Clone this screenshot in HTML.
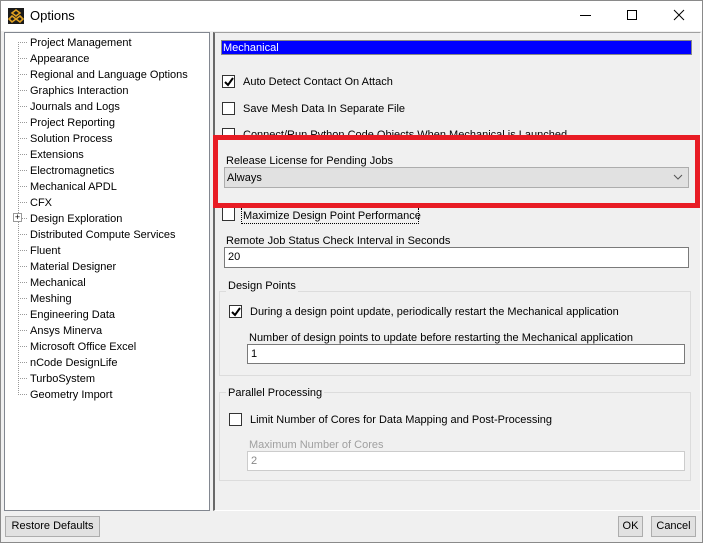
<!DOCTYPE html>
<html><head><style>
*{margin:0;padding:0;box-sizing:border-box}
body{width:703px;height:543px;background:#f0f0f0;font-family:"Liberation Sans",sans-serif;font-size:11px;color:#000;position:relative;overflow:hidden}
.a{position:absolute}
.t{position:absolute;white-space:nowrap;line-height:14px}
.cb{position:absolute;width:13px;height:13px;border:1px solid #333;background:#fff}
.inp{position:absolute;background:#fff;border:1px solid #7a7a7a;padding-left:3px;line-height:18px}
.grp{position:absolute;border:1px solid #dcdcdc}
.btn{position:absolute;border:1px solid #adadad;background:#e1e1e1;text-align:center;line-height:19px}
</style></head><body>
<div class="a" style="left:0;top:0;width:703px;height:31px;background:#fff"></div>
<svg class="a" style="left:8px;top:8px" width="16" height="16"><rect width="16" height="16" fill="#1a1a1a"/><g fill="none" stroke="#e0a020" stroke-width="1.6"><path d="M8 2L12 5L8 8L4 5Z"/><path d="M4 8L8 11L4 14L1 11Z"/><path d="M12 8L15 11L12 14L8 11Z"/></g></svg>
<div class="t" style="left:30px;top:9px;font-size:13px">Options</div>
<div class="a" style="left:580px;top:15px;width:11px;height:1px;background:#000"></div>
<div class="a" style="left:627px;top:10px;width:10px;height:10px;border:1px solid #000"></div>
<svg class="a" style="left:673px;top:9px" width="12" height="12"><path d="M1 1L11 11M11 1L1 11" stroke="#000" stroke-width="1"/></svg>
<div class="a" style="left:0;top:0;width:703px;height:543px;border:1px solid #8a8a8a;pointer-events:none"></div>

<div class="a" style="left:4px;top:32px;width:206px;height:479px;background:#fff;border:1px solid #828790"></div>
<div class="a" style="left:18px;top:42px;height:353px;border-left:1px dotted #999"></div>
<div class="a" style="left:13px;top:213px;width:9px;height:9px;border:1px solid #999;background:#fff;font-size:9px;line-height:7px;text-align:center">+</div>

<div class="a" style="left:213px;top:32px;width:488px;height:479px;border-left:2px solid #696969;border-top:1px solid #a0a0a0;border-right:1px solid #fff;border-bottom:1px solid #fff"></div>
<div class="a" style="left:221px;top:40px;width:471px;height:15px;background:#0000ff;border:1px solid #888"></div>
<div class="t" style="left:223px;top:41px;color:#fff">Mechanical</div>

<div class="cb" style="left:222px;top:75px"></div>
<svg class="a" style="left:224px;top:77px" width="10" height="10"><path d="M1 5L4 8L9 1" stroke="#000" stroke-width="2" fill="none"/></svg>
<div class="t" style="left:243px;top:75px">Auto Detect Contact On Attach</div>
<div class="cb" style="left:222px;top:102px"></div>
<div class="t" style="left:243px;top:102px">Save Mesh Data In Separate File</div>
<div class="cb" style="left:222px;top:128px"></div>
<div class="t" style="left:243px;top:128px">Connect/Run Python Code Objects When Mechanical is Launched</div>

<div class="a" style="left:213px;top:135px;width:487px;height:73px;background:#f0f0f0;border:5px solid #e81c24"></div>
<div class="t" style="left:226px;top:154px">Release License for Pending Jobs</div>
<div class="a" style="left:224px;top:167px;width:465px;height:21px;background:#e1e1e1;border:1px solid #adadad"></div>
<div class="t" style="left:227px;top:171px">Always</div>
<svg class="a" style="left:673px;top:174px" width="10" height="7"><path d="M1 1L5 5L9 1" stroke="#555" fill="none"/></svg>

<div class="cb" style="left:222px;top:208px;border-top:none"></div>
<div class="a" style="left:241px;top:208px;width:178px;height:16px;border:1px dotted #000;border-top:none"></div>
<div class="t" style="left:243px;top:209px">Maximize Design Point Performance</div>
<div class="t" style="left:226px;top:234px">Remote Job Status Check Interval in Seconds</div>
<div class="inp" style="left:224px;top:247px;width:465px;height:21px">20</div>

<div class="grp" style="left:219px;top:291px;width:472px;height:85px"></div>
<div class="t" style="left:226px;top:279px;background:#f0f0f0;padding:0 2px">Design Points</div>
<div class="cb" style="left:229px;top:305px"></div>
<svg class="a" style="left:231px;top:307px" width="10" height="10"><path d="M1 5L4 8L9 1" stroke="#000" stroke-width="2" fill="none"/></svg>
<div class="t" style="left:250px;top:305px">During a design point update, periodically restart the Mechanical application</div>
<div class="t" style="left:249px;top:331px">Number of design points to update before restarting the Mechanical application</div>
<div class="inp" style="left:247px;top:344px;width:438px;height:20px">1</div>

<div class="grp" style="left:219px;top:392px;width:472px;height:89px"></div>
<div class="t" style="left:226px;top:386px;background:#f0f0f0;padding:0 2px">Parallel Processing</div>
<div class="cb" style="left:229px;top:413px"></div>
<div class="t" style="left:250px;top:413px">Limit Number of Cores for Data Mapping and Post-Processing</div>
<div class="t" style="left:249px;top:438px;color:#a0a0a0">Maximum Number of Cores</div>
<div class="inp" style="left:247px;top:451px;width:438px;height:20px;border-color:#ccc;color:#888">2</div>

<div class="btn" style="left:5px;top:516px;width:95px;height:21px">Restore Defaults</div>
<div class="btn" style="left:618px;top:516px;width:25px;height:21px">OK</div>
<div class="btn" style="left:651px;top:516px;width:45px;height:21px">Cancel</div>

<div class="t" style="left:30px;top:35px;line-height:16px">Project Management<br>Appearance<br>Regional and Language Options<br>Graphics Interaction<br>Journals and Logs<br>Project Reporting<br>Solution Process<br>Extensions<br>Electromagnetics<br>Mechanical APDL<br>CFX<br>Design Exploration<br>Distributed Compute Services<br>Fluent<br>Material Designer<br>Mechanical<br>Meshing<br>Engineering Data<br>Ansys Minerva<br>Microsoft Office Excel<br>nCode DesignLife<br>TurboSystem<br>Geometry Import</div>
<svg class="a" style="left:18px;top:34px" width="12" height="370"><g stroke="#999" stroke-dasharray="1 1">
<path d="M0 8.5H10M0 24.5H10M0 40.5H10M0 56.5H10M0 72.5H10M0 88.5H10M0 104.5H10M0 120.5H10M0 136.5H10M0 152.5H10M0 168.5H10M0 200.5H10M0 216.5H10M0 232.5H10M0 248.5H10M0 264.5H10M0 280.5H10M0 296.5H10M0 312.5H10M0 328.5H10M0 344.5H10M0 360.5H10M4 184.5H10"/></g></svg>
</body></html>
